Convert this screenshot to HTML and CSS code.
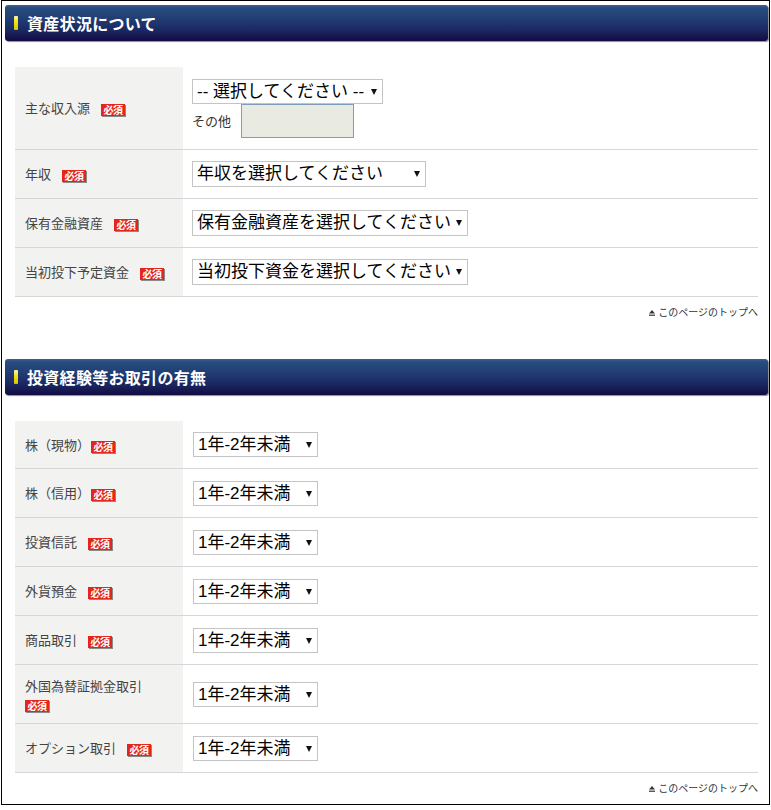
FILE: index.html
```html
<!DOCTYPE html>
<html lang="ja">
<head>
<meta charset="utf-8">
<title>資産状況について</title>
<link rel="stylesheet" href="styles.css">
</head>
<body>
<div class="frame">
  <section class="sec">
    <h2 class="sec-head">資産状況について</h2>
    <div class="sec-body">
      <table class="form">
        <tr class="row-tall">
          <th>主な収入源<span class="req">必須</span></th>
          <td class="val">
            <span class="sel"><select class="w190 h25"><option>-- 選択してください --</option></select></span>
            <div class="other"><span class="other-label">その他</span><input class="other-input" type="text"></div>
          </td>
        </tr>
        <tr>
          <th>年収<span class="req">必須</span></th>
          <td class="val"><span class="sel"><select class="w234"><option>年収を選択してください</option></select></span></td>
        </tr>
        <tr>
          <th>保有金融資産<span class="req">必須</span></th>
          <td class="val"><span class="sel"><select class="w276"><option>保有金融資産を選択してください</option></select></span></td>
        </tr>
        <tr>
          <th>当初投下予定資金<span class="req">必須</span></th>
          <td class="val"><span class="sel"><select class="w276"><option>当初投下資金を選択してください</option></select></span></td>
        </tr>
      </table>
      <p class="pagetop"><a href="#"><svg class="pt-icon" width="6" height="6" viewBox="0 0 6 6"><path d="M3 0 L6 3.6 L0 3.6 Z" fill="#333"/><rect x="0" y="4.6" width="6" height="1.2" fill="#333"/></svg>このページのトップへ</a></p>
    </div>
  </section>

  <section class="sec sec2">
    <h2 class="sec-head">投資経験等お取引の有無</h2>
    <div class="sec-body">
      <table class="form form2">
        <tr class="row-first">
          <th>株（現物）<span class="req req-tight">必須</span></th>
          <td class="val"><span class="sel"><select class="w125"><option>1年-2年未満</option></select></span></td>
        </tr>
        <tr>
          <th>株（信用）<span class="req req-tight">必須</span></th>
          <td class="val"><span class="sel"><select class="w125"><option>1年-2年未満</option></select></span></td>
        </tr>
        <tr>
          <th>投資信託<span class="req">必須</span></th>
          <td class="val"><span class="sel"><select class="w125"><option>1年-2年未満</option></select></span></td>
        </tr>
        <tr>
          <th>外貨預金<span class="req">必須</span></th>
          <td class="val"><span class="sel"><select class="w125"><option>1年-2年未満</option></select></span></td>
        </tr>
        <tr>
          <th>商品取引<span class="req">必須</span></th>
          <td class="val"><span class="sel"><select class="w125"><option>1年-2年未満</option></select></span></td>
        </tr>
        <tr class="row-2line">
          <th>外国為替証拠金取引<br><span class="req req-nl">必須</span></th>
          <td class="val"><span class="sel"><select class="w125"><option>1年-2年未満</option></select></span></td>
        </tr>
        <tr>
          <th>オプション取引<span class="req">必須</span></th>
          <td class="val"><span class="sel"><select class="w125"><option>1年-2年未満</option></select></span></td>
        </tr>
      </table>
      <p class="pagetop"><a href="#"><svg class="pt-icon" width="6" height="6" viewBox="0 0 6 6"><path d="M3 0 L6 3.6 L0 3.6 Z" fill="#333"/><rect x="0" y="4.6" width="6" height="1.2" fill="#333"/></svg>このページのトップへ</a></p>
    </div>
  </section>
</div>
</body>
</html>
```

FILE: styles.css
```css
* { box-sizing: border-box; }

html, body {
  margin: 0;
  padding: 0;
  background: #fff;
}

body {
  font-family: "Noto Sans CJK JP", "Liberation Sans", sans-serif;
  color: #444;
}

.frame {
  width: 769px;
  height: 805px;
  margin-left: 1px;
  border: 1px solid #000;
  padding: 4px 1px 0 3px;
  overflow: hidden;
}

.sec-head {
  margin: 0;
  height: 36px;
  display: flex;
  align-items: center;
  padding-left: 9px;
  border-radius: 3px;
  background: linear-gradient(to bottom, #3a5f8f 0px, #284c80 3px, #213d74 14px, #1a2660 26px, #130b42 36px);
  box-shadow: 1px 1px 1px rgba(0, 0, 0, 0.45);
  color: #fff;
  font-size: 16px;
  font-weight: bold;
  line-height: 20px;
  letter-spacing: 0.3px;
}

.sec-head::before {
  content: "";
  width: 4px;
  height: 14px;
  margin-right: 9px;
  background: linear-gradient(to bottom, #fdf8a0, #f2e21c 40%, #d9c400);
  border-radius: 1px;
}

.sec-body {
  padding: 26px 10px 0;
}

.sec2 {
  margin-top: 40px;
}

.form {
  width: 743px;
  border-collapse: collapse;
  table-layout: fixed;
}

.form tr {
  border-bottom: 1px solid #d6d6d6;
}

.form th {
  width: 168px;
  padding: 0 10px;
  background: #f2f2f0;
  text-align: left;
  font-weight: normal;
  font-size: 13px;
  line-height: 18px;
  color: #444;
  vertical-align: middle;
}

.form .val {
  padding: 11px 10px 11px 9px;
  vertical-align: middle;
  background: #fff;
  font-size: 13px;
  line-height: 18px;
}

.form2 .val {
  padding: 12px 10px 11px 10px;
}

.form2 .row-first .val {
  padding: 11px 10px 11px 10px;
}

.row-tall .val {
  padding: 12px 10px 11px 9px;
}

.form2 .row-2line .val {
  padding-top: 17px;
  padding-bottom: 16px;
}

.row-2line th {
  padding-top: 2px;
}

.req {
  display: inline-block;
  margin-left: 11px;
  width: 24px;
  height: 12px;
  background: #e3261b;
  color: #fff;
  font-size: 10px;
  font-weight: bold;
  line-height: 12px;
  text-align: center;
  letter-spacing: -0.5px;
  vertical-align: -1px;
  box-shadow: 1px 1px 0 #8a8a8a;
}

.req-tight {
  margin-left: 1px;
}

.req-nl {
  margin-left: 0;
}

.sel {
  position: relative;
  display: block;
  width: fit-content;
}

.sel::after {
  content: "";
  position: absolute;
  right: 6px;
  top: 50%;
  margin-top: -3px;
  border-left: 3.5px solid transparent;
  border-right: 3.5px solid transparent;
  border-top: 6px solid #111;
  pointer-events: none;
}

.sel select {
  -webkit-appearance: none;
  appearance: none;
  display: block;
  height: 26px;
  margin: 0;
  padding: 0 14px 0 4px;
  border: 1px solid #c4c4c4;
  border-radius: 0;
  background: #fff;
  color: #000;
  font-family: "Liberation Sans", "Noto Sans CJK JP", sans-serif;
  font-size: 17px;
  line-height: 24px;
}

.form2 .sel select {
  height: 25px;
}

.sel select.h25 { height: 25px; }
.w190 { width: 191px; }
.w234 { width: 234px; }
.w276 { width: 276px; }
.w125 { width: 125px; }

.other {
  display: flex;
  align-items: center;
}

.other-label {
  font-size: 13px;
  color: #333;
  width: 49px;
}

.other-input {
  display: block;
  width: 113px;
  height: 34px;
  margin: 0;
  border: 1px solid #7f9db9;
  background: #e9eae2;
  padding: 0 4px;
}

.pagetop {
  margin: 8px 0 0;
  text-align: right;
  font-size: 10px;
  line-height: 14px;
}

.pagetop a {
  color: #333;
  text-decoration: none;
}

.pt-icon {
  margin-right: 3px;
  vertical-align: 0;
}
```
